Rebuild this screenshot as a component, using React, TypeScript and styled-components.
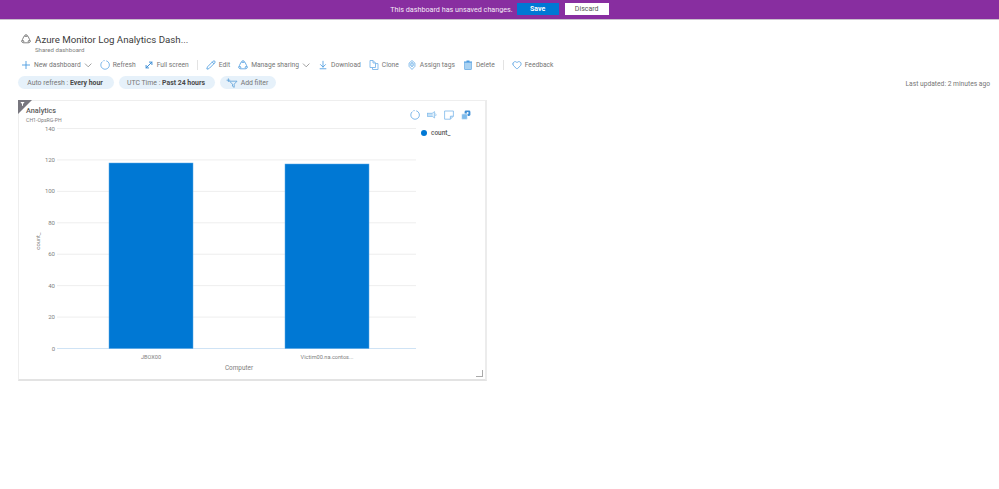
import React from 'react';
import styled, { createGlobalStyle } from 'styled-components';
import { Heart, MoveDiagonal, Pencil, ArrowDownToLine } from 'lucide-react';

const GlobalStyle = createGlobalStyle`
  html, body {
    margin: 0;
    padding: 0;
    background: #fff;
    font-family: Roboto, "Open Sans", "Liberation Sans", sans-serif;
    overflow: hidden;
  }
`;

const Page = styled.div`
  width: 999px;
  height: 489px;
  display: flex;
  flex-direction: column;
`;

const Banner = styled.div`
  height: 20px;
  box-sizing: border-box;
  background: #882ea0;
  border-bottom: 1px solid #c9c0cc;
  display: flex;
  align-items: center;
  justify-content: center;
  padding: 0 2px 1px 2px;
  gap: 4px;
  color: #f3e9f6;
  font-size: 7.2px;
`;

const BannerButton = styled.div<{ $primary?: boolean }>`
  width: ${(p) => (p.$primary ? 42 : 44)}px;
  height: 12px;
  display: flex;
  align-items: center;
  justify-content: center;
  font-size: 7px;
  font-weight: ${(p) => (p.$primary ? 700 : 400)};
  background: ${(p) => (p.$primary ? '#0078d4' : '#fff')};
  color: ${(p) => (p.$primary ? '#fff' : '#555')};
  margin-left: ${(p) => (p.$primary ? 0 : 2)}px;
`;

const TitleBlock = styled.div`
  padding: 13px 0 0 21px;
  display: flex;
  gap: 4px;
`;

const TitleIcon = styled.svg`
  width: 10px;
  height: 10px;
  margin-top: 1px;
`;

const Title = styled.div`
  font-size: 9.7px;
  line-height: 13px;
  color: #3c3c3c;
`;

const Subtitle = styled.div`
  font-size: 6.1px;
  line-height: 8px;
  color: #808080;
`;

const Toolbar = styled.div`
  margin-top: 4px;
  padding-left: 21px;
  height: 14px;
  display: flex;
  align-items: center;
  gap: 8px;
`;

const ToolItem = styled.div`
  display: flex;
  align-items: center;
  gap: 3px;
  font-size: 6.7px;
  color: #767676;
  white-space: nowrap;
  svg {
    flex: none;
    width: 10px;
    height: 10px;
    color: #4b9be0;
  }
`;

const Separator = styled.div`
  width: 1px;
  height: 10px;
  background: #e3e3e3;
`;

const FilterRow = styled.div`
  margin-top: 4px;
  padding: 0 9px 0 18px;
  display: flex;
  align-items: center;
  gap: 5px;
`;

const Pill = styled.div<{ $width: number }>`
  width: ${(p) => p.$width}px;
  height: 13px;
  box-sizing: border-box;
  border-radius: 7px;
  background: #e6f1fa;
  display: flex;
  align-items: center;
  justify-content: center;
  gap: 3px;
  padding-right: 2px;
  font-size: 6.9px;
  color: #767676;
  white-space: pre;
  b {
    color: #4a4a4a;
    font-weight: 700;
  }
`;

const LastUpdated = styled.div`
  margin-left: auto;
  margin-top: 2px;
  font-size: 6.7px;
  color: #767676;
`;

const Card = styled.div`
  position: relative;
  margin: 11px 0 0 18px;
  width: 469px;
  height: 281px;
  box-sizing: border-box;
  background: #fff;
  border: 1px solid #eeeeee;
  border-bottom: 2px solid #e3e3e3;
  border-right: 2px solid #ececec;
  display: flex;
  flex-direction: column;
`;

const CornerBadge = styled.svg`
  position: absolute;
  left: -1px;
  top: -1px;
  width: 14px;
  height: 14px;
`;

const ResizeHandle = styled.div`
  position: absolute;
  right: 2px;
  bottom: 2px;
  width: 6px;
  height: 6px;
  border-right: 1px solid #aaa;
  border-bottom: 1px solid #aaa;
`;

const CardHead = styled.div`
  display: flex;
  justify-content: space-between;
  padding: 5px 14px 0 7px;
  height: 23px;
  box-sizing: border-box;
`;

const CardTitle = styled.div`
  font-size: 7.3px;
  line-height: 10px;
  font-weight: 500;
  color: #5c5c5c;
`;

const CardSubtitle = styled.div`
  font-size: 5.2px;
  line-height: 8px;
  color: #808080;
`;

const CardActions = styled.div`
  display: flex;
  align-items: flex-start;
  gap: 7px;
  padding-top: 4px;
`;

const ChartRow = styled.div`
  display: flex;
  position: relative;
`;

const Legend = styled.div`
  display: flex;
  align-items: center;
  gap: 4px;
  height: 10px;
  margin: 4px 0 0 3px;
  font-size: 6.5px;
  font-weight: 500;
  color: #5c5c5c;
`;

const LegendDot = styled.div`
  width: 6px;
  height: 6px;
  border-radius: 50%;
  background: #0078d4;
`;

const PlusIcon = () => (
  <svg viewBox="0 0 10 10" fill="none" stroke="#4b9be0" strokeWidth="0.9">
    <path d="M5 1V9M1 5H9" />
  </svg>
);

const ChevronIcon = () => (
  <svg viewBox="0 0 8 10" fill="none" stroke="#777" strokeWidth="0.7" style={{ width: 8 }}>
    <path d="M1 3.6L4.2 6.8L7.4 3.6" />
  </svg>
);

const RingIcon = ({ size = 10 }: { size?: number }) => (
  <svg width={size} height={size} viewBox="0 0 10 10" fill="none" stroke="#5ea6e4" strokeWidth="0.8">
    <path d="M6.2 0.8A4.3 4.3 0 1 1 2.4 1.6" />
    <path d="M3.2 0.7L4.8 0.6" strokeDasharray="0.6 0.4" />
  </svg>
);

const ShareIcon = () => (
  <svg viewBox="0 0 10 10" fill="none" stroke="#4b9be0" strokeWidth="0.8">
    <path d="M3 2.2A3.6 3.6 0 0 1 7 2.2L8.6 5.6A2 2 0 0 1 7.4 8.8H2.6A2 2 0 0 1 1.4 5.6Z" />
    <circle cx="5" cy="1.6" r="1" fill="#fff" />
    <circle cx="1.8" cy="7.4" r="1" fill="#fff" />
    <circle cx="8.2" cy="7.4" r="1" fill="#fff" />
  </svg>
);

const CloneIcon = () => (
  <svg viewBox="0 0 9 10" fill="none" stroke="#7db8ea" strokeWidth="0.9">
    <path d="M0.5 0.5H3.5L6 3V7.5H0.5Z" />
    <path d="M3.5 0.5V3H6" />
    <path d="M6 3.6H8.5V9.5H3V7.5" />
  </svg>
);

const TagIcon = () => (
  <svg viewBox="0 0 8 11" fill="none" stroke="#6aaee6" strokeWidth="0.9">
    <path d="M4 0.6L7.2 3.4V7L4 10.4L0.8 7V3.4Z" />
    <ellipse cx="4" cy="5" rx="1.5" ry="2.2" fill="#d3e8f8" />
  </svg>
);

const TrashIcon = () => (
  <svg viewBox="0 0 9 10">
    <path d="M3 0.5H6V1.5H8.5V2.4H0.5V1.5H3Z" fill="#4b9be0" />
    <rect x="1.2" y="2.4" width="6.6" height="7.2" fill="#a9d2f2" stroke="#4b9be0" strokeWidth="0.6" />
  </svg>
);

const AddFilterIcon = () => (
  <svg width="12" height="10" viewBox="0 0 12 10" fill="none" stroke="#5a9fd8" strokeWidth="0.8">
    <path d="M3.5 3.2H11L8.2 6.2V9.4L6.5 8.2V6.2Z" />
    <path d="M2.4 0.4V4M0.6 2.2H4.2" />
  </svg>
);

const SpeakerIcon = () => (
  <svg width="10" height="10" viewBox="0 0 10 10" fill="none" stroke="#7db8ea" strokeWidth="0.7">
    <rect x="0.5" y="3.2" width="4.8" height="3.2" fill="#c4e0f6" />
    <path d="M5.3 3.2L7.6 1.6V8L5.3 6.4" fill="#e4f1fb" />
    <path d="M8.6 3.6A2 2 0 0 1 8.6 6" />
  </svg>
);

const NoteIcon = () => (
  <svg width="10" height="10" viewBox="0 0 10 10" fill="none" stroke="#7db8ea" strokeWidth="0.8">
    <path d="M0.6 1H9.4V6.2L6.4 9.2H0.6Z" />
    <path d="M9.4 6.2H6.4V9.2" fill="#c4e0f6" />
  </svg>
);

const PinIcon = () => (
  <svg width="10" height="10" viewBox="0 0 10 10">
    <rect x="3.6" y="0.6" width="5.8" height="5.4" rx="1.4" fill="#3f8fd6" />
    <rect x="0.6" y="3.8" width="5.8" height="5.6" rx="1.2" fill="#7fbcec" stroke="#fff" strokeWidth="0.6" />
    <circle cx="6.6" cy="3" r="1" fill="#fff" />
  </svg>
);

const yTicks = [140, 120, 100, 80, 60, 40, 20, 0];
const bars = [
  { label: 'JBOX00', x: 90, top: 39 },
  { label: 'Victim00.na.contos...', x: 266, top: 40 },
];
const AXIS_TOP = 4.5;
const TICK_STEP = 31.43;
const AXIS_BOTTOM = AXIS_TOP + TICK_STEP * 7;

const Chart = () => (
  <svg width="399" height="255" viewBox="0 0 399 255" style={{ display: 'block' }} fontFamily="Roboto, sans-serif">
    {yTicks.map((t, i) => {
      const y = AXIS_TOP + i * TICK_STEP;
      return (
        <g key={t}>
          <line x1="38" x2="397" y1={y} y2={y} stroke={t === 0 ? '#cfe3f5' : '#eeeeee'} strokeWidth="1" />
          <text x="36" y={y + 2} textAnchor="end" fontSize="6" fill="#808080">
            {t}
          </text>
        </g>
      );
    })}
    {bars.map((b) => (
      <rect key={b.label} x={b.x} y={b.top} width="84" height={AXIS_BOTTOM - b.top} fill="#0078d4" stroke="#5aa9e6" strokeWidth="0.5" />
    ))}
    {bars.map((b) => (
      <text key={b.label} x={b.x + 42} y="234.5" textAnchor="middle" fontSize="5.6" fill="#808080">
        {b.label}
      </text>
    ))}
    <text x="220" y="246" textAnchor="middle" fontSize="6.4" fill="#808080">
      Computer
    </text>
    <text transform="translate(21 117) rotate(-90)" textAnchor="middle" fontSize="5.8" fill="#808080">
      count_
    </text>
  </svg>
);

export default function App() {
  return (
    <Page>
      <GlobalStyle />
      <Banner>
        <span>This dashboard has unsaved changes.</span>
        <BannerButton $primary>Save</BannerButton>
        <BannerButton>Discard</BannerButton>
      </Banner>
      <TitleBlock>
        <TitleIcon viewBox="0 0 10 10" fill="none" stroke="#666" strokeWidth="0.8">
          <path d="M3 2.2A3.6 3.6 0 0 1 7 2.2L8.6 5.6A2 2 0 0 1 7.4 8.8H2.6A2 2 0 0 1 1.4 5.6Z" />
          <circle cx="5" cy="1.6" r="1" fill="#fff" />
          <circle cx="1.8" cy="7.4" r="1" fill="#fff" />
          <circle cx="8.2" cy="7.4" r="1" fill="#fff" />
        </TitleIcon>
        <div>
          <Title>Azure Monitor Log Analytics Dash...</Title>
          <Subtitle>Shared dashboard</Subtitle>
        </div>
      </TitleBlock>
      <Toolbar>
        <ToolItem>
          <PlusIcon />
          New dashboard
          <ChevronIcon />
        </ToolItem>
        <ToolItem>
          <RingIcon />
          Refresh
        </ToolItem>
        <ToolItem>
          <MoveDiagonal strokeWidth={2.4} color="#3f8fd6" />
          Full screen
        </ToolItem>
        <Separator />
        <ToolItem>
          <Pencil strokeWidth={2} />
          Edit
        </ToolItem>
        <ToolItem>
          <ShareIcon />
          Manage sharing
          <ChevronIcon />
        </ToolItem>
        <ToolItem>
          <ArrowDownToLine strokeWidth={2} />
          Download
        </ToolItem>
        <ToolItem>
          <CloneIcon />
          Clone
        </ToolItem>
        <ToolItem>
          <TagIcon />
          Assign tags
        </ToolItem>
        <ToolItem>
          <TrashIcon />
          Delete
        </ToolItem>
        <Separator />
        <ToolItem>
          <Heart strokeWidth={1.8} />
          Feedback
        </ToolItem>
      </Toolbar>
      <FilterRow>
        <Pill $width={96}>
          <span>
            Auto refresh : <b>Every hour</b>
          </span>
        </Pill>
        <Pill $width={96}>
          <span>
            UTC Time : <b>Past 24 hours</b>
          </span>
        </Pill>
        <Pill $width={56}>
          <AddFilterIcon />
          Add filter
        </Pill>
        <LastUpdated>Last updated: 2 minutes ago</LastUpdated>
      </FilterRow>
      <Card>
        <CornerBadge viewBox="0 0 14 14">
          <path d="M0 0H14L0 14Z" fill="#77767e" />
          <path d="M2.4 2H6.6L5 4V6L4 5.4V4Z" fill="#fff" />
        </CornerBadge>
        <CardHead>
          <div>
            <CardTitle>Analytics</CardTitle>
            <CardSubtitle>CH1-OpsRG-PH</CardSubtitle>
          </div>
          <CardActions>
            <RingIcon />
            <SpeakerIcon />
            <NoteIcon />
            <PinIcon />
          </CardActions>
        </CardHead>
        <ChartRow>
          <Chart />
          <Legend>
            <LegendDot />
            count_
          </Legend>
        </ChartRow>
        <ResizeHandle />
      </Card>
    </Page>
  );
}
